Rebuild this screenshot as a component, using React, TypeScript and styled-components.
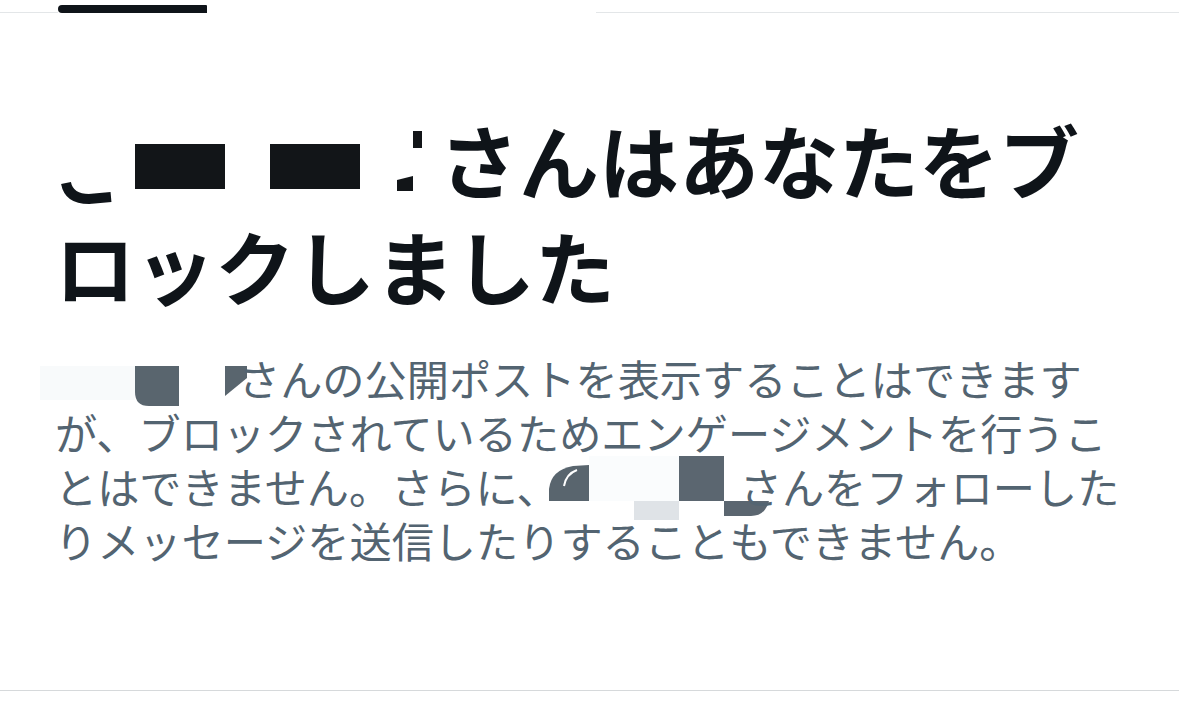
import React from "react";
import styled, { createGlobalStyle } from "styled-components";

const GlobalStyle = createGlobalStyle`
  html, body {
    margin: 0;
    padding: 0;
    background: #ffffff;
  }
  body {
    font-family: "Noto Sans CJK JP", "Noto Sans", sans-serif;
  }
`;

const Page = styled.div`
  width: 1179px;
  height: 728px;
  overflow: hidden;
  display: flex;
  flex-direction: column;
  background: #ffffff;
  padding-bottom: 37px;
  box-sizing: border-box;
`;

const TabBar = styled.div`
  display: flex;
  align-items: flex-end;
  height: 13px;
`;

const TabLine = styled.div<{ $width?: number; $line: boolean }>`
  height: 13px;
  box-sizing: border-box;
  ${(p) => (p.$width ? `width: ${p.$width}px;` : "flex: 1;")}
  border-bottom: 1px solid ${(p) => (p.$line ? "#e3e6e8" : "transparent")};
`;

const TabIndicator = styled.div`
  width: 149px;
  height: 8px;
  background: #0f1419;
  border-radius: 4px 1px 0 4px;
`;

const Content = styled.main`
  padding: 92px 51px 0 55px;
`;

const Title = styled.h1`
  margin: 0;
  font-family: "Noto Sans CJK JP", "Noto Sans", sans-serif;
  font-weight: 700;
  font-size: 80px;
  line-height: 106px;
  color: #0f1419;
  letter-spacing: 0;
`;

const Description = styled.p`
  margin: 34px 0 0;
  font-family: "Noto Sans CJK JP", "Noto Sans", sans-serif;
  font-weight: 400;
  font-size: 42.2px;
  line-height: 54px;
  color: #536471;
`;

const Redaction = styled.svg`
  display: inline-block;
  vertical-align: -0.12em;
  overflow: visible;
`;

const Divider = styled.hr`
  margin: auto 0 0;
  border: none;
  height: 1px;
  background: #d6d9db;
  width: 100%;
`;

const TitleName = () => (
  <Redaction width={384} height={80} viewBox="0 0 384 80" aria-hidden="true">
    <path d="M11 60 Q14 76 34 76 L56 74" fill="none" stroke="#0f1419" strokeWidth={10} />
    <rect x={80} y={21} width={90} height={45} fill="#121518" />
    <rect x={215} y={21} width={90} height={45} fill="#121518" />
    <rect x={358} y={8} width={9} height={17} fill="#121518" />
    <polygon points="342,57 358,53 358,68 342,68" fill="#121518" />
  </Redaction>
);

const BodyNameFirst = () => (
  <Redaction width={183} height={42} viewBox="0 0 183 42" aria-hidden="true">
    <rect x={-15} y={7} width={95} height={34} fill="#f8fafb" />
    <path d="M80 7 H124 V47 H94 Q80 47 80 33 Z" fill="#59656e" />
    <polygon points="170,7 192,7 192,19 170,37" fill="#59656e" />
  </Redaction>
);

const BodyNameSecond = () => (
  <Redaction width={181} height={42} viewBox="0 0 181 42" aria-hidden="true">
    <rect x={30} y={-11} width={90} height={45} fill="#fafcfd" />
    <path d="M-10 34 V22 Q-8 3 14 -1 L30 -2 V34 Z" fill="#59656e" />
    <path d="M5 19 Q7 7 18 3" fill="none" stroke="#ffffff" strokeWidth={2} />
    <rect x={75} y={34} width={45} height={19} fill="#dfe3e7" />
    <rect x={120} y={-11} width={45} height={45} fill="#5b6670" />
    <path d="M165 34 H210 Q206 49 192 49 H165 Z" fill="#5b6670" />
  </Redaction>
);

export default function App() {
  return (
    <>
      <GlobalStyle />
      <Page>
        <TabBar>
          <TabLine $width={58} $line />
          <TabIndicator />
          <TabLine $width={389} $line={false} />
          <TabLine $line />
        </TabBar>
        <Content>
          <Title>
            <TitleName />
            さんはあなたをブロックしました
          </Title>
          <Description>
            <BodyNameFirst />
            さんの公開ポストを表示することはできますが、ブロックされているためエンゲージメントを行うことはできません。さらに、
            <BodyNameSecond />
            さんをフォローしたりメッセージを送信したりすることもできません。
          </Description>
        </Content>
        <Divider />
      </Page>
    </>
  );
}
